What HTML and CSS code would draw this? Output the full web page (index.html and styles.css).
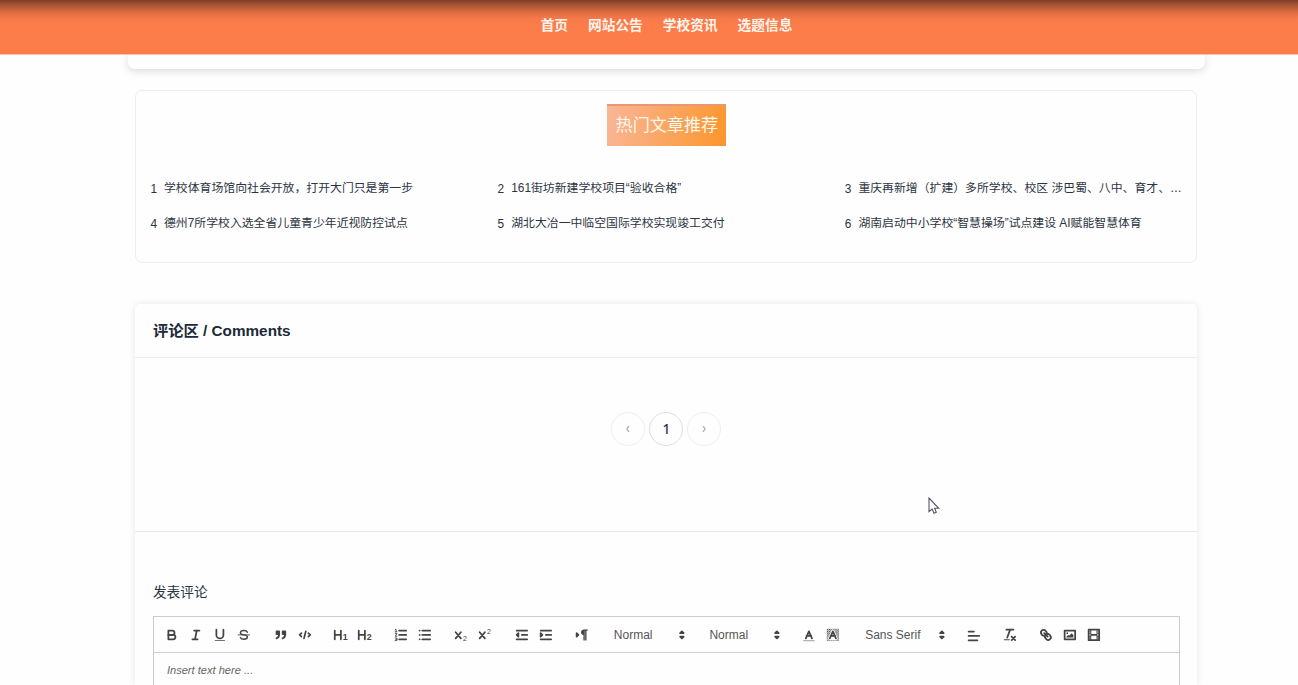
FILE: index.html
```
<!DOCTYPE html>
<html lang="zh-CN">
<head>
    <meta charset="UTF-8">
    <meta name="viewport" content="width=device-width, initial-scale=1.0">
    <title>学校资讯</title>
    <link rel="stylesheet" href="styles.css">
</head>
<body>
    <header class="header">
        <nav class="nav">
            <a>首页</a>
            <a>网站公告</a>
            <a>学校资讯</a>
            <a>选题信息</a>
        </nav>
    </header>

    <main>
        <div class="article-end"></div>

        <section class="hot">
            <h2 class="hot-title">热门文章推荐</h2>
            <div class="hot-list">
                <div class="hot-item"><span class="num">1</span><a>学校体育场馆向社会开放，打开大门只是第一步</a></div>
                <div class="hot-item"><span class="num">2</span><a>161街坊新建学校项目<q>验收合格</q></a></div>
                <div class="hot-item"><span class="num">3</span><a>重庆再新增（扩建）多所学校、校区 涉巴蜀、八中、育才、南开</a></div>
                <div class="hot-item"><span class="num">4</span><a>德州7所学校入选全省儿童青少年近视防控试点</a></div>
                <div class="hot-item"><span class="num">5</span><a>湖北大冶一中临空国际学校实现竣工交付</a></div>
                <div class="hot-item"><span class="num">6</span><a>湖南启动中小学校<q>智慧操场</q>试点建设 AI赋能智慧体育</a></div>
            </div>
        </section>

        <section class="comments">
            <h3 class="comments-head">评论区 / Comments</h3>
            <div class="comments-body">
                <div class="pager">
                    <button class="page disabled"><svg viewBox="0 0 10 10"><path d="M6 2.2 3.8 5 6 7.8"/></svg></button>
                    <button class="page">1</button>
                    <button class="page disabled"><svg viewBox="0 0 10 10"><path d="M4 2.2 6.2 5 4 7.8"/></svg></button>
                </div>
            </div>
            <div class="comment-form">
                <div class="form-label">发表评论</div>
                <div class="editor">
                    <div class="toolbar">
                        <div class="group">
                            <button><svg viewBox="0 0 18 18"><path d="M5,4H9.5A2.5,2.5,0,0,1,9.5,9H5Z"/><path d="M5,9h5.5A2.5,2.5,0,0,1,10.5,14H5Z"/></svg></button>
                            <button><svg viewBox="0 0 18 18"><path d="M7,4H13M5,14H11M8,14L10,4"/></svg></button>
                            <button><svg viewBox="0 0 18 18"><path d="M5,3V9a4,4,0,0,0,8,0V3"/><rect class="fill" x="3" y="15" width="12" height="1" rx=".5"/></svg></button>
                            <button><svg viewBox="0 0 18 18"><path class="thin" d="M2.5,9H15.5"/><path class="mid" d="M13,6C12.500,4.700,11,4,9,4C6.800,4,5,5,5,6.500C5,8,6.500,8.700,9,9C11.500,9.300,13,10,13,11.500C13,13,11.200,14,9,14C7,14,5.500,13.300,5,12"/></svg></button>
                        </div>
                        <div class="group">
                            <button><svg viewBox="0 0 18 18"><path class="both" d="M4,5H7V8H4ZM11,5H14V8H11Z"/><path d="M7,8c0,4.031-3,5-3,5M14,8c0,4.031-3,5-3,5"/></svg></button>
                            <button><svg viewBox="0 0 18 18"><path d="M5,7L3,9L5,11M13,7L15,9L13,11M10,5L8,13"/></svg></button>
                        </div>
                        <div class="group">
                            <button><svg viewBox="0 0 18 18"><path d="M2,4V14M9,4V14M2,9H9"/><text x="11" y="15">1</text></svg></button>
                            <button><svg viewBox="0 0 18 18"><path d="M2,4V14M9,4V14M2,9H9"/><text x="11" y="15">2</text></svg></button>
                        </div>
                        <div class="group">
                            <button><svg viewBox="0 0 18 18"><path d="M7,4H15M7,9H15M7,14H15"/><path class="thin" d="M2.500,3L3.500,2.500V5.500M2.500,5.500H4.500M2.500,7.500H4.500L2.500,10.500H4.500M2.500,12.500H4.500V15.500H2.500M3,14H4.500"/></svg></button>
                            <button><svg viewBox="0 0 18 18"><path d="M6,4H15M6,9H15M6,14H15M3,4V4M3,9V9M3,14V14"/></svg></button>
                        </div>
                        <div class="group">
                            <button><svg viewBox="0 0 18 18"><path d="M3,6L9,13M9,6L3,13"/><text class="small" x="11.500" y="16">2</text></svg></button>
                            <button><svg viewBox="0 0 18 18"><path d="M3,6L9,13M9,6L3,13"/><text class="small" x="11.500" y="7.500">2</text></svg></button>
                        </div>
                        <div class="group">
                            <button><svg viewBox="0 0 18 18"><path d="M3,14H15M3,4H15M9,9H15"/><path class="both" d="M5,7V11L3,9Z"/></svg></button>
                            <button><svg viewBox="0 0 18 18"><path d="M3,14H15M3,4H15M9,9H15"/><path class="both" d="M3,7V11L5,9Z"/></svg></button>
                        </div>
                        <div class="group">
                            <button><svg viewBox="0 0 18 18"><path class="both" d="M3,7V11L5,9Z"/><path class="fill" d="M11,3a3,3,0,0,0,0,6V15H12V4H13V15H14V4H15V3Z"/><path class="slim" d="M11,3.500H15.500M11.500,4V15M13.500,4V15"/></svg></button>
                        </div>
                        <div class="group">
                            <div class="picker">Normal<svg viewBox="0 0 18 18"><path class="both" d="M7,11L9,13L11,11ZM7,7L9,5L11,7Z"/></svg></div>
                        </div>
                        <div class="group">
                            <div class="picker">Normal<svg viewBox="0 0 18 18"><path class="both" d="M7,11L9,13L11,11ZM7,7L9,5L11,7Z"/></svg></div>
                        </div>
                        <div class="group">
                            <button><svg viewBox="0 0 18 18"><path class="faint" d="M3,15.500H15"/><path d="M5.500,13L9,5L12.500,13M6.380,10H11.630"/></svg></button>
                            <button><svg viewBox="0 0 18 18">
                                <defs><pattern id="dots" width="2.400" height="2.400" patternUnits="userSpaceOnUse"><path class="fill" d="M0,0H1.200V1.200H0ZM1.200,1.200H2.400V2.400H1.200Z"/></pattern></defs>
                                <rect class="dotted" x="2" y="2" width="14" height="14"/><path class="halo" d="M5.500,13L9,5L12.500,13Z"/><path d="M5.500,13L9,5L12.500,13M6.380,10H11.630"/></svg></button>
                        </div>
                        <div class="group">
                            <div class="picker font">Sans Serif<svg viewBox="0 0 18 18"><path class="both" d="M7,11L9,13L11,11ZM7,7L9,5L11,7Z"/></svg></div>
                        </div>
                        <div class="group">
                            <button class="align"><svg viewBox="0 0 18 18"><path d="M3,9H15M3,14H13M3,4H9"/></svg></button>
                        </div>
                        <div class="group">
                            <button><svg viewBox="0 0 18 18"><path d="M5,3H13M6,12L9.350,3"/><path d="M11,11L15,15M15,11L11,15"/><rect class="fill" x="2" y="14" width="7" height="1" rx=".5"/></svg></button>
                        </div>
                        <div class="group">
                            <button><svg viewBox="0 0 18 18"><path d="M7,7L11,11"/><path d="M8.900,4.577a3.476,3.476,0,0,1,.36,4.679A3.476,3.476,0,0,1,4.577,8.900C3.185,7.500,2.035,6.400,4.217,4.217S7.500,3.185,8.900,4.577Z"/><path d="M13.423,9.100a3.476,3.476,0,0,0-4.679-.36,3.476,3.476,0,0,0,.36,4.679c1.392,1.392,2.500,2.542,4.679.36S14.815,10.500,13.423,9.100Z"/></svg></button>
                            <button><svg viewBox="0 0 18 18"><rect x="3" y="4" width="12" height="10"/><circle class="fill" cx="6" cy="7" r="1"/><path class="fill" d="M5,12V11L7,9L8,10L11,7L13,9V12Z"/></svg></button>
                            <button><svg viewBox="0 0 18 18"><rect x="3" y="3" width="12" height="12"/><path class="fill" d="M5,3H6V15H5ZM12,3H13V15H12ZM5,8H13V10H5ZM3,5H6V6H3ZM3,7H6V8H3ZM3,10H6V11H3ZM3,12H6V13H3ZM12,5H15V6H12ZM12,7H15V8H12ZM12,10H15V11H12ZM12,12H15V13H12Z"/></svg></button>
                        </div>
                    </div>
                    <div class="editor-text">Insert text here ...</div>
                </div>
            </div>
        </section>
    </main>

    <svg class="cursor" viewBox="0 0 12 18"><path d="M1,1V14.500L4.200,12L6,16.200L8.300,15.200L6.600,11.300H10.800Z"/></svg>
</body>
</html>
```
FILE: styles.css
```
* {
    box-sizing: border-box;
}

body {
    display: flex;
    flex-direction: column;
    margin: 0;
    height: 685px;
    overflow: hidden;
    background: #fefefe;
    color: #2c3442;
    font-family: "Liberation Sans", "Noto Sans CJK SC", sans-serif;
}

button {
    padding: 0;
    border: none;
    background: none;
    font-family: inherit;
}

.header {
    position: relative;
    flex: none;
    height: 54px;
    background: linear-gradient(#7c3f28 0, #a85334 5px, #db6b40 12px, #f6784a 18px, #fc7c4a 24px);
    box-shadow: 0 1px 0 #f7c5ae;
    z-index: 1;
}

.nav {
    display: flex;
    justify-content: center;
    gap: 20px;
    padding: 16px 0 0 35px;
    color: #fff4ec;
    font-size: 13.7px;
    font-weight: bold;
    line-height: 20px;
}

main {
    display: flex;
    flex: 1;
    flex-direction: column;
    width: 1062px;
    min-height: 0;
    margin-left: 135.4px;
}

/* bottom edge of the article card */
.article-end {
    flex: none;
    height: 15px;
    margin: 0 -7.5px;
    border-radius: 0 0 7px 7px;
    background: #fefefe;
    box-shadow: 0 2px 8px rgba(0, 0, 0, 0.15);
}

.hot {
    flex: none;
    height: 173px;
    margin-top: 21px;
    padding: 13px 13px 0 14px;
    border: 1px solid #eceff1;
    border-radius: 7px;
}

.hot-title {
    width: 119px;
    height: 42px;
    margin: 0 auto;
    border-top: 2px solid #ea9874;
    background: linear-gradient(100deg, #fab698, #fb962b);
    color: #fff8ee;
    font-size: 17.1px;
    font-weight: normal;
    line-height: 40px;
    text-align: center;
}

.hot-list {
    display: grid;
    grid-template-columns: repeat(3, 337.5px);
    column-gap: 9.7px;
    margin-top: 25px;
}

.hot-item {
    display: flex;
    gap: 7px;
    height: 35px;
    font-size: 11.86px;
    line-height: 35px;
}

.hot-item a {
    overflow: hidden;
    white-space: nowrap;
    text-overflow: ellipsis;
}

.hot-item q {
    quotes: "“" "”";
}

.num {
    padding-top: 1px;
}

.comments {
    display: flex;
    flex: 1;
    flex-direction: column;
    min-height: 0;
    margin-top: 41px;
    border-radius: 5px 5px 0 0;
    box-shadow: 0 0 7px rgba(0, 0, 0, 0.1);
}

.comments-head {
    flex: none;
    height: 54px;
    margin: 0;
    padding-left: 17.5px;
    border-bottom: 1px solid #eaecee;
    color: #202a38;
    font-size: 15.3px;
    line-height: 53px;
}

.comments-body {
    flex: none;
    height: 174px;
    padding-top: 54px;
    border-bottom: 1px solid #e7e9eb;
}

.pager {
    display: flex;
    justify-content: center;
    gap: 4px;
}

.page {
    display: flex;
    align-items: center;
    justify-content: center;
    width: 34px;
    height: 34px;
    border: 1px solid #dedede;
    border-radius: 50%;
    color: #2c3442;
    font-family: "Noto Sans", sans-serif;
    font-size: 13.7px;
    font-weight: 500;
    line-height: 30px;
}

.page.disabled {
    border-color: #eee;
}

.page svg {
    width: 10px;
    height: 10px;
    fill: none;
    stroke: #aaa;
    stroke-width: 1.2;
}

.comment-form {
    display: flex;
    flex: 1;
    flex-direction: column;
    min-height: 0;
    padding: 50px 17px 0 17.5px;
}

.form-label {
    flex: none;
    height: 34px;
    font-size: 13.7px;
    line-height: 22px;
}

.editor {
    flex: 1;
    min-height: 0;
    border: 1px solid #ccc;
    border-bottom: none;
}

.toolbar {
    display: flex;
    gap: 12.25px;
    height: 36px;
    padding: 6px 0 0 6.5px;
    border-bottom: 1px solid #d0d0d0;
}

.group {
    display: flex;
    height: 24px;
}

.toolbar button {
    display: flex;
    align-items: center;
    justify-content: center;
    width: 24px;
    height: 24px;
}

.toolbar .align {
    padding-top: 2px;
}

.toolbar svg {
    width: 15.8px;
    height: 15.8px;
    fill: none;
    stroke: #444;
    stroke-width: 2;
    stroke-linecap: round;
    stroke-linejoin: round;
}

.toolbar .thin,
.toolbar .slim {
    stroke-width: 1;
}

.toolbar .mid {
    stroke-width: 1.6;
}

.toolbar .both {
    fill: #444;
}

.toolbar .fill {
    fill: #444;
    stroke: none;
}

.toolbar .faint {
    stroke-width: 1.4;
    opacity: 0.4;
}

.toolbar .dotted {
    fill: url(#dots);
    stroke: none;
}

.toolbar .halo {
    fill: #fefefe;
    stroke: #fefefe;
    stroke-width: 4;
}

.toolbar text {
    fill: #444;
    stroke: none;
    font-size: 10px;
    font-weight: bold;
}

.toolbar text.small {
    font-size: 8px;
    font-weight: normal;
}

.picker {
    display: flex;
    align-items: center;
    justify-content: space-between;
    width: 83.3px;
    padding-left: 7.7px;
    color: #555;
    font-size: 12px;
}

.picker.font {
    width: 92px;
}

.editor-text {
    padding: 10px 13px 0;
    color: #666;
    font-size: 11.1px;
    font-style: italic;
    line-height: 15px;
}

.cursor {
    position: absolute;
    left: 928px;
    top: 497px;
    width: 12px;
    height: 18px;
    fill: #fefefe;
    stroke: #555560;
    stroke-width: 1.1;
    z-index: 2;
}
```
